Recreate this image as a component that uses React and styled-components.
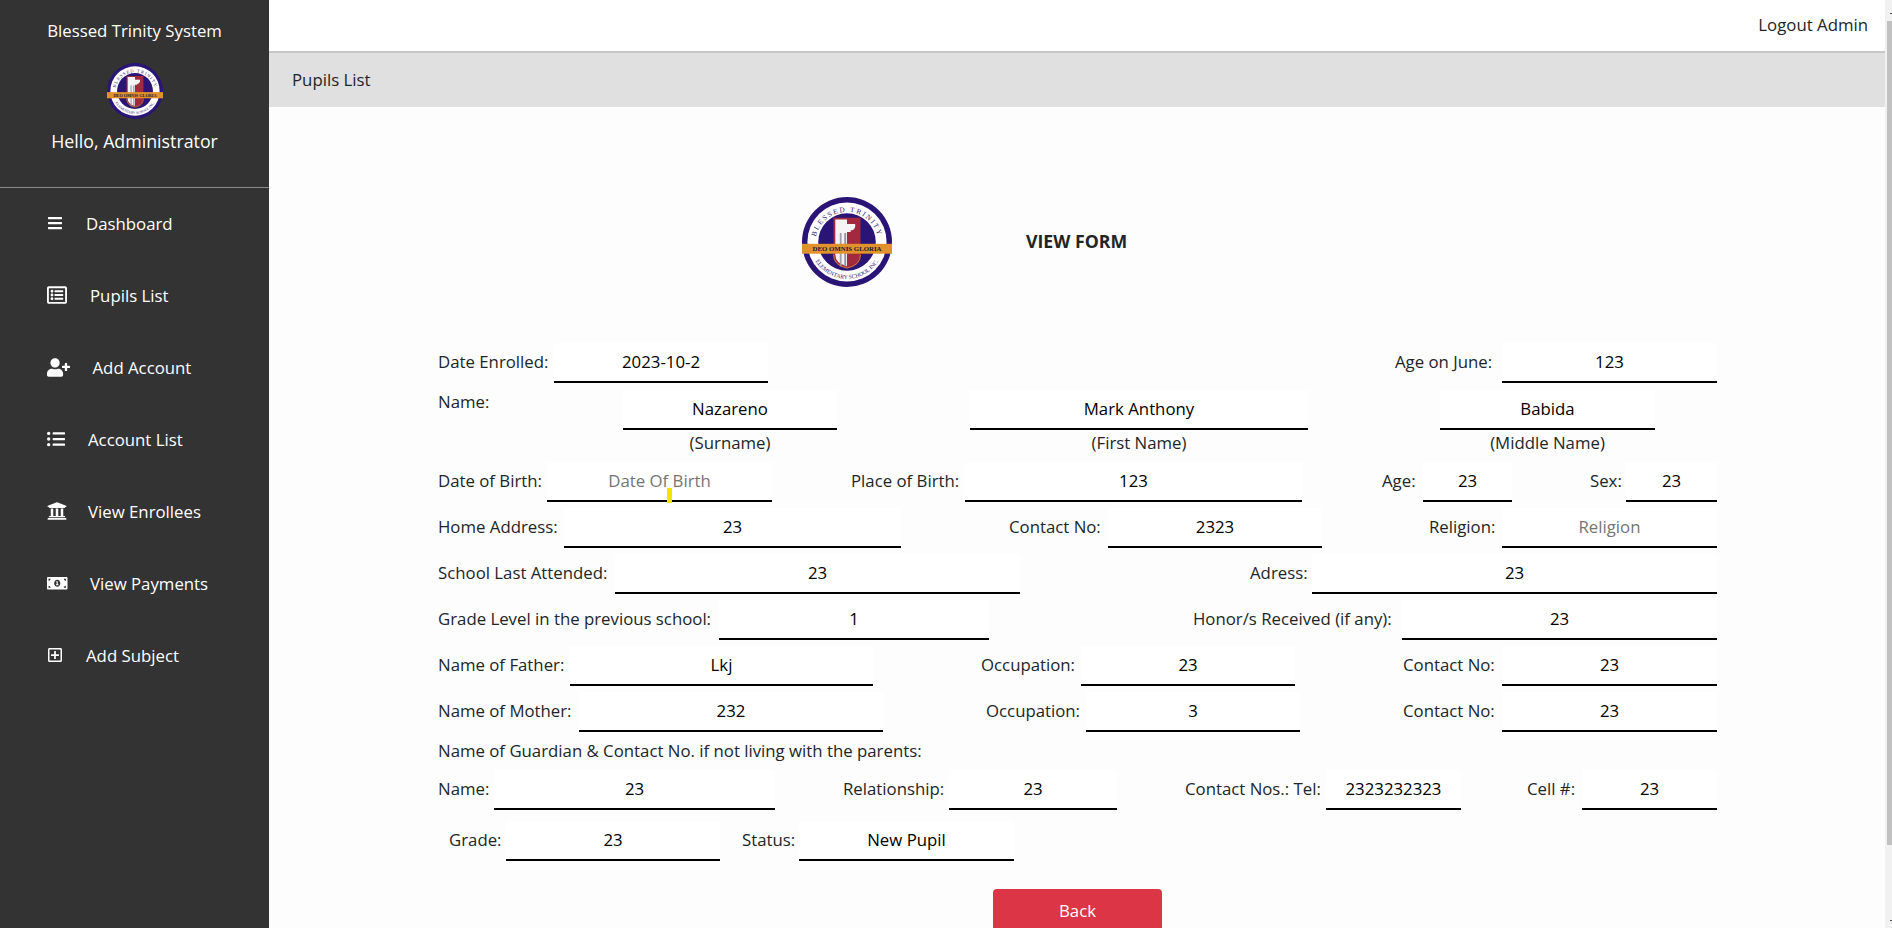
import React from "react";
import styled, { createGlobalStyle } from "styled-components";
import {
  FaBars,
  FaRegListAlt,
  FaUserPlus,
  FaListUl,
  FaUniversity,
  FaMoneyBillAlt,
  FaRegPlusSquare,
} from "react-icons/fa";

const Global = createGlobalStyle`
  html, body { margin: 0; padding: 0; height: 928px; overflow: hidden; background: #fdfdfd; }
  body, input, button { font-family: "Open Sans", "Noto Sans", "Liberation Sans", sans-serif; font-size: 16.8px; }
`;

const Page = styled.div`
  display: flex;
  width: 1892px;
  height: 928px;
  overflow: hidden;
`;

const Sidebar = styled.aside`
  flex: 0 0 269px;
  background: #333333;
  color: #fff;
  display: flex;
  flex-direction: column;
`;

const Brand = styled.div`
  flex: none;
  height: 187px;
  border-bottom: 1px solid #8a8a8a;
  display: flex;
  flex-direction: column;
  align-items: center;
`;

const BrandName = styled.div`
  margin-top: 19px;
  line-height: 24px;
`;

const BrandLogo = styled.div`
  margin-top: 20px;
  height: 56px;
`;

const Hello = styled.div`
  margin-top: 10px;
  font-size: 17.8px;
  line-height: 24px;
`;

const Nav = styled.nav`
  display: flex;
  flex-direction: column;
  padding: 17px 0 0 47px;
`;

const NavItem = styled.a`
  display: flex;
  align-items: center;
  height: 36px;
  margin-bottom: 36px;
  color: #fff;
`;

const IconSlot = styled.span`
  flex: 0 0 ${(p) => p.$slot}px;
  display: flex;
  svg {
    width: ${(p) => p.$w}px;
    height: auto;
    display: block;
  }
`;

const Main = styled.main`
  flex: 1;
  min-width: 0;
  display: flex;
  flex-direction: column;
  color: #212529;
`;

const TopBar = styled.header`
  flex: none;
  height: 49px;
  background: #fff;
  border-bottom: 2px solid #c6c6c6;
  display: flex;
  align-items: center;
  justify-content: flex-end;
  padding: 0 17px 2px 0;
`;

const Crumb = styled.div`
  flex: none;
  height: 52px;
  background: #e0e0e0;
  display: flex;
  align-items: center;
  padding: 0 0 2px 23px;
`;

const Sheet = styled.div`
  flex: none;
  background: #fdfdfd;
  padding: 90px 0 0 169px;
`;

const FormHead = styled.div`
  display: flex;
  align-items: center;
  height: 90px;
  margin-bottom: 56px;
  padding-left: 364px;
`;

const FormTitle = styled.h1`
  margin: 0 0 2px 134px;
  font-size: 17.7px;
  font-weight: 700;
  line-height: 24px;
`;

const FormBody = styled.form`
  display: flex;
  flex-direction: column;
  gap: 6px;
`;

const Row = styled.div`
  display: flex;
  align-items: ${(p) => (p.$top ? "flex-start" : "center")};
  margin-top: ${(p) => p.$mt || 0}px;
  margin-left: ${(p) => p.$ml || 0}px;
`;

const Label = styled.label`
  flex: 0 0 ${(p) => p.$w}px;
  margin-left: ${(p) => p.$ml || 0}px;
  line-height: 24px;
  white-space: nowrap;
  padding-bottom: 2px;
`;

const InputWrap = styled.div`
  position: relative;
  flex: 0 0 ${(p) => p.$w}px;
  height: 40px;
`;

const LineInput = styled.input`
  display: block;
  width: 100%;
  height: 100%;
  box-sizing: border-box;
  border: 0;
  border-bottom: 2px solid #000;
  background: #fff;
  color: #000;
  text-align: center;
  padding: 0 0 2px;
  outline: none;
  &::placeholder {
    color: #757575;
    opacity: 1;
  }
`;

const Cursor = styled.span`
  position: absolute;
  left: 120px;
  top: 26px;
  width: 5px;
  height: 15px;
  background: #ffe100;
`;

const NameCol = styled.div`
  display: flex;
  flex-direction: column;
  align-items: center;
  margin-left: ${(p) => p.$ml || 0}px;
  flex: 0 0 ${(p) => p.$w}px;
`;

const NameBox = styled.div`
  width: 100%;
  height: 40px;
`;

const Caption = styled.div`
  line-height: 26px;
`;

const GuardianNote = styled.div`
  height: 26px;
  line-height: 26px;
`;

const BackRow = styled.div`
  padding: 28px 0 0 555px;
`;

const BackButton = styled.button`
  width: 169px;
  height: 44px;
  border: 0;
  border-radius: 4px;
  background: #dc3545;
  color: #fff;
  padding: 0 0 2px;
`;

const Scrollbar = styled.div`
  flex: 0 0 7px;
  background: #f1f1f1;
  display: flex;
  flex-direction: column;
`;

const ScrollArrow = styled.div`
  align-self: flex-end;
  width: 2px;
  height: 1px;
  margin-top: ${(p) => p.$mt}px;
  background: #505050;
`;

const ScrollThumb = styled.div`
  margin: 7px 0 0 2px;
  height: 824px;
  background: #c1c1c1;
`;

const Seal = ({ size, id }) => (
  <svg width={size} height={size} viewBox="0 0 100 100" role="img" aria-label="Blessed Trinity seal">
    <defs>
      <path id={`${id}-top`} d="M 14.5 52 A 35.5 35.5 0 0 1 85.5 52" />
      <path id={`${id}-bot`} d="M 12.3 66 A 41 41 0 0 0 87.7 66" />
    </defs>
    <circle cx="50" cy="50" r="50" fill="#2a1577" />
    <circle cx="50" cy="50" r="44" fill="#fff" />
    <circle cx="50" cy="50" r="32" fill="#2a1577" />
    <path d="M 35 23 H 65 V 64 Q 65 76 50 79 Q 35 76 35 64 Z" fill="#a32a3e" />
    <path d="M 37 25 H 50 V 77 Q 37 74 37 64 Z" fill="#f4f2f4" />
    <path d="M 38 30 H 59 Q 60 35 56 37 H 54 V 39 H 40 V 37 Q 37 35 38 30 Z" fill="#f6f4f5" />
    <rect x="42" y="40" width="2" height="37" fill="#9ea0ac" />
    <rect x="47" y="40" width="2" height="37" fill="#8f92a0" />
    <path d="M 35 64 Q 35 76 50 79 Q 65 76 65 64" fill="none" stroke="#d98a26" strokeWidth="1" />
    <rect x="0" y="52" width="100" height="11" fill="#e2922c" />
    <text x="50" y="60.5" textAnchor="middle" fontFamily="Liberation Serif, serif" fontWeight="700" fontSize="7.6" fill="#1b1440">
      DEO OMNIS GLORIA
    </text>
    <text fontFamily="Liberation Serif, serif" fontSize="8" letterSpacing="1.8" fill="#2a1577">
      <textPath href={`#${id}-top`} startOffset="50%" textAnchor="middle">
        BLESSED TRINITY
      </textPath>
    </text>
    <text fontFamily="Liberation Serif, serif" fontSize="6.4" fill="#2a1577">
      <textPath href={`#${id}-bot`} startOffset="50%" textAnchor="middle">
        ELEMENTARY SCHOOL INC.
      </textPath>
    </text>
  </svg>
);

const NAV = [
  { Icon: FaBars, w: 16, slot: 39, text: "Dashboard" },
  { Icon: FaRegListAlt, w: 20, slot: 43, text: "Pupils List" },
  { Icon: FaUserPlus, w: 23, slot: 45.5, text: "Add Account" },
  { Icon: FaListUl, w: 18, slot: 41, text: "Account List" },
  { Icon: FaUniversity, w: 20, slot: 41, text: "View Enrollees" },
  { Icon: FaMoneyBillAlt, w: 20.5, slot: 43, text: "View Payments" },
  { Icon: FaRegPlusSquare, w: 16, slot: 39, text: "Add Subject" },
];

const Field = ({ label, ml, lw, w, value, placeholder, cursor }) => (
  <>
    <Label $ml={ml} $w={lw}>
      {label}
    </Label>
    <InputWrap $w={w}>
      <LineInput readOnly value={value ?? ""} placeholder={placeholder} />
      {cursor && <Cursor />}
    </InputWrap>
  </>
);

const ROWS = [
  [
    { label: "Date of Birth:", lw: 109, w: 225, placeholder: "Date Of Birth", cursor: true },
    { label: "Place of Birth:", ml: 79, lw: 114, w: 337, value: "123" },
    { label: "Age:", ml: 80, lw: 41, w: 89, value: "23" },
    { label: "Sex:", ml: 78, lw: 36, w: 91, value: "23" },
  ],
  [
    { label: "Home Address:", lw: 126, w: 337, value: "23" },
    { label: "Contact No:", ml: 108, lw: 99, w: 214, value: "2323" },
    { label: "Religion:", ml: 107, lw: 73, w: 215, placeholder: "Religion" },
  ],
  [
    { label: "School Last Attended:", lw: 177, w: 405, value: "23" },
    { label: "Adress:", ml: 230, lw: 62, w: 405, value: "23" },
  ],
  [
    { label: "Grade Level in the previous school:", lw: 281, w: 270, value: "1" },
    { label: "Honor/s Received (if any):", ml: 204, lw: 209, w: 315, value: "23" },
  ],
  [
    { label: "Name of Father:", lw: 132, w: 303, value: "Lkj" },
    { label: "Occupation:", ml: 108, lw: 100, w: 214, value: "23" },
    { label: "Contact No:", ml: 108, lw: 99, w: 215, value: "23" },
  ],
  [
    { label: "Name of Mother:", lw: 141, w: 304, value: "232" },
    { label: "Occupation:", ml: 103, lw: 100, w: 214, value: "3" },
    { label: "Contact No:", ml: 103, lw: 99, w: 215, value: "23" },
  ],
];

const NAMES = [
  { ml: 0, w: 214, value: "Nazareno", caption: "(Surname)" },
  { ml: 133, w: 338, value: "Mark Anthony", caption: "(First Name)" },
  { ml: 132, w: 215, value: "Babida", caption: "(Middle Name)" },
];

export default function App() {
  return (
    <>
      <Global />
      <Page>
        <Sidebar>
          <Brand>
            <BrandName>Blessed Trinity System</BrandName>
            <BrandLogo>
              <Seal size={56} id="side" />
            </BrandLogo>
            <Hello>Hello, Administrator</Hello>
          </Brand>
          <Nav>
            {NAV.map(({ Icon, w, slot, text }) => (
              <NavItem key={text}>
                <IconSlot $w={w} $slot={slot}>
                  <Icon />
                </IconSlot>
                {text}
              </NavItem>
            ))}
          </Nav>
        </Sidebar>
        <Main>
          <TopBar>Logout Admin</TopBar>
          <Crumb>Pupils List</Crumb>
          <Sheet>
            <FormHead>
              <Seal size={90} id="form" />
              <FormTitle>VIEW FORM</FormTitle>
            </FormHead>
            <FormBody>
              <Row>
                <Field label="Date Enrolled:" lw={116} w={214} value="2023-10-2" />
                <Field label="Age on June:" ml={627} lw={107} w={215} value="123" />
              </Row>
              <Row $top $mt={1}>
                <Label $w={185}>Name:</Label>
                {NAMES.map((n) => (
                  <NameCol key={n.caption} $ml={n.ml} $w={n.w}>
                    <NameBox>
                      <LineInput readOnly value={n.value} />
                    </NameBox>
                    <Caption>{n.caption}</Caption>
                  </NameCol>
                ))}
              </Row>
              {ROWS.map((fields) => (
                <Row key={fields[0].label}>
                  {fields.map((f) => (
                    <Field key={f.label} {...f} />
                  ))}
                </Row>
              ))}
              <GuardianNote>Name of Guardian &amp; Contact No. if not living with the parents:</GuardianNote>
              <Row>
                <Field label="Name:" lw={56} w={281} value="23" />
                <Field label="Relationship:" ml={68} lw={106} w={168} value="23" />
                <Field label="Contact Nos.: Tel:" ml={68} lw={141} w={135} value="2323232323" />
                <Field label="Cell #:" ml={66} lw={55} w={135} value="23" />
              </Row>
              <Row $mt={5} $ml={11}>
                <Field label="Grade:" lw={57} w={214} value="23" />
                <Field label="Status:" ml={22} lw={57} w={215} value="New Pupil" />
              </Row>
            </FormBody>
            <BackRow>
              <BackButton type="button">Back</BackButton>
            </BackRow>
          </Sheet>
        </Main>
        <Scrollbar>
          <ScrollArrow $mt={13} />
          <ScrollThumb />
          <ScrollArrow $mt={75} />
        </Scrollbar>
      </Page>
    </>
  );
}
